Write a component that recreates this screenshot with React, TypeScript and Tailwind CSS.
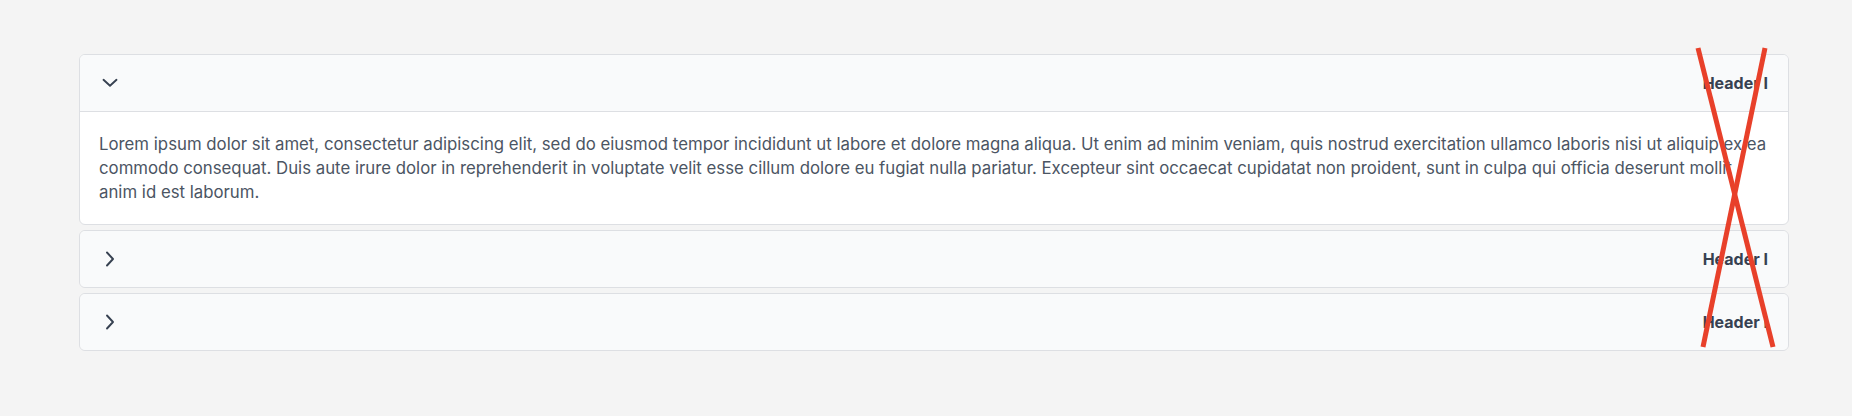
import React from "react";

const lorem =
  "Lorem ipsum dolor sit amet, consectetur adipiscing elit, sed do eiusmod tempor incididunt ut labore et dolore magna aliqua. Ut enim ad minim veniam, quis nostrud exercitation ullamco laboris nisi ut aliquip ex ea commodo consequat. Duis aute irure dolor in reprehenderit in voluptate velit esse cillum dolore eu fugiat nulla pariatur. Excepteur sint occaecat cupidatat non proident, sunt in culpa qui officia deserunt mollit anim id est laborum.";

function Chevron({ open }: { open: boolean }) {
  return (
    <svg width="16" height="16" viewBox="0 0 16 16" fill="none" className="shrink-0 text-[#374151]">
      <polyline
        points={open ? "1.5,4.8 8,10.8 14.5,4.8" : "5,1.5 11,8 5,14.5"}
        stroke="currentColor"
        strokeWidth="1.9"
        strokeLinecap="round"
        strokeLinejoin="round"
      />
    </svg>
  );
}

function Panel({ title, open, children }: { title: string; open: boolean; children?: React.ReactNode }) {
  return (
    <div className="rounded-md border border-[#dddfe3] overflow-hidden bg-white">
      <div
        className={`flex items-center justify-between bg-[#f9fafb] pl-[22px] pr-5 py-4 ${
          open ? "border-b border-[#dddfe3]" : ""
        }`}
      >
        <Chevron open={open} />
        <span className="text-base leading-6 font-bold text-[#374151]">{title}</span>
      </div>
      {open && (
        <div className="pl-[19px] pr-5 py-5 text-[16.8px] leading-6 text-[#4b5563]">{children}</div>
      )}
    </div>
  );
}

export default function App() {
  return (
    <div
      className="relative min-h-[416px] bg-[#f4f4f4] pl-[79px] pr-[63px] pt-[54px]"
      style={{ fontFamily: "Inter, 'Noto Sans', sans-serif" }}
    >
      <div className="flex flex-col gap-[5px]">
        <Panel title="Header I" open>
          {lorem}
        </Panel>
        <Panel title="Header I" open={false} />
        <Panel title="Header I" open={false} />
      </div>

      {/* red cross laid over the header labels */}
      <svg
        className="pointer-events-none absolute left-0 top-0"
        width="1852"
        height="416"
        viewBox="0 0 1852 416"
      >
        <line x1="1698" y1="48" x2="1773" y2="347" stroke="#e8402a" strokeWidth="5" />
        <line x1="1765" y1="48" x2="1703" y2="347" stroke="#e8402a" strokeWidth="5" />
      </svg>
    </div>
  );
}
